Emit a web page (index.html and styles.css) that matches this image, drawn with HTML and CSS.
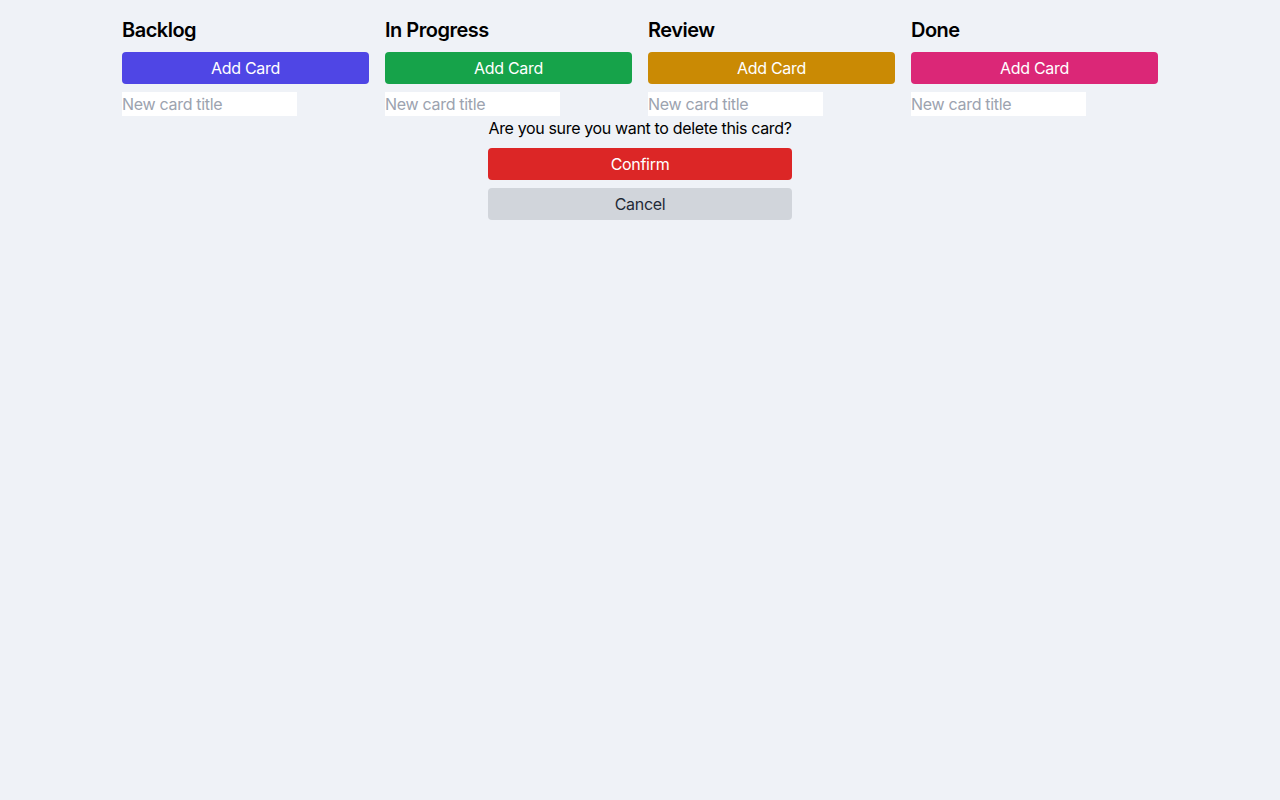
FILE: index.html
```html
<!DOCTYPE html>
<html lang="en">
<head>
<meta charset="utf-8">
<title>Board</title>
<link rel="stylesheet" href="styles.css">
</head>
<body>
<main class="page">
  <section class="board">
    <div class="column">
      <h2 class="column-title">Backlog</h2>
      <button class="btn btn-indigo">Add Card</button>
      <input class="card-input" type="text" placeholder="New card title">
    </div>
    <div class="column">
      <h2 class="column-title">In Progress</h2>
      <button class="btn btn-green">Add Card</button>
      <input class="card-input" type="text" placeholder="New card title">
    </div>
    <div class="column">
      <h2 class="column-title">Review</h2>
      <button class="btn btn-yellow">Add Card</button>
      <input class="card-input" type="text" placeholder="New card title">
    </div>
    <div class="column">
      <h2 class="column-title">Done</h2>
      <button class="btn btn-pink">Add Card</button>
      <input class="card-input" type="text" placeholder="New card title">
    </div>
  </section>
  <section class="confirm">
    <p class="confirm-text">Are you sure you want to delete this card?</p>
    <button class="btn btn-red">Confirm</button>
    <button class="btn btn-gray">Cancel</button>
  </section>
</main>
</body>
</html>
```

FILE: styles.css
```css
* { box-sizing: border-box; }
html, body {
  margin: 0;
  padding: 0;
  background: #eff2f7;
  font-family: Inter, "Noto Sans", sans-serif;
  color: #000;
  min-height: 100%;
}
.page {
  padding-top: 16px;
}
.board {
  width: 1036px;
  margin: 0 auto;
  display: grid;
  grid-template-columns: repeat(4, 1fr);
  column-gap: 16px;
}
.column {
  display: flex;
  flex-direction: column;
  align-items: flex-start;
}
.column-title {
  margin: 0 0 8px;
  font-size: 20px;
  line-height: 28px;
  font-weight: 600;
  letter-spacing: -0.5px;
}
.btn {
  display: block;
  width: 100%;
  height: 32px;
  border: none;
  border-radius: 4px;
  font-family: inherit;
  font-size: 16px;
  line-height: 24px;
  letter-spacing: -0.3px;
  color: #fff;
  padding: 4px 0;
  text-align: center;
  cursor: pointer;
}
.btn-indigo { background: #4f46e5; }
.btn-green { background: #16a34a; }
.btn-yellow { background: #ca8a04; }
.btn-pink { background: #db2777; }
.btn-red { background: #dc2626; }
.btn-gray { background: #d1d5db; color: #1f2937; }
.card-input {
  margin-top: 8px;
  width: 175px;
  height: 24px;
  border: none;
  padding: 0;
  background: #fff;
  font-family: inherit;
  font-size: 16px;
  line-height: 24px;
  letter-spacing: -0.3px;
  outline: none;
}
.card-input::placeholder { color: #9ca3af; }
.confirm {
  width: 304px;
  margin: 0 auto;
  display: flex;
  flex-direction: column;
  gap: 8px;
}
.confirm-text {
  margin: 0;
  font-size: 16px;
  line-height: 24px;
  letter-spacing: -0.35px;
  text-align: center;
  white-space: nowrap;
}
```
